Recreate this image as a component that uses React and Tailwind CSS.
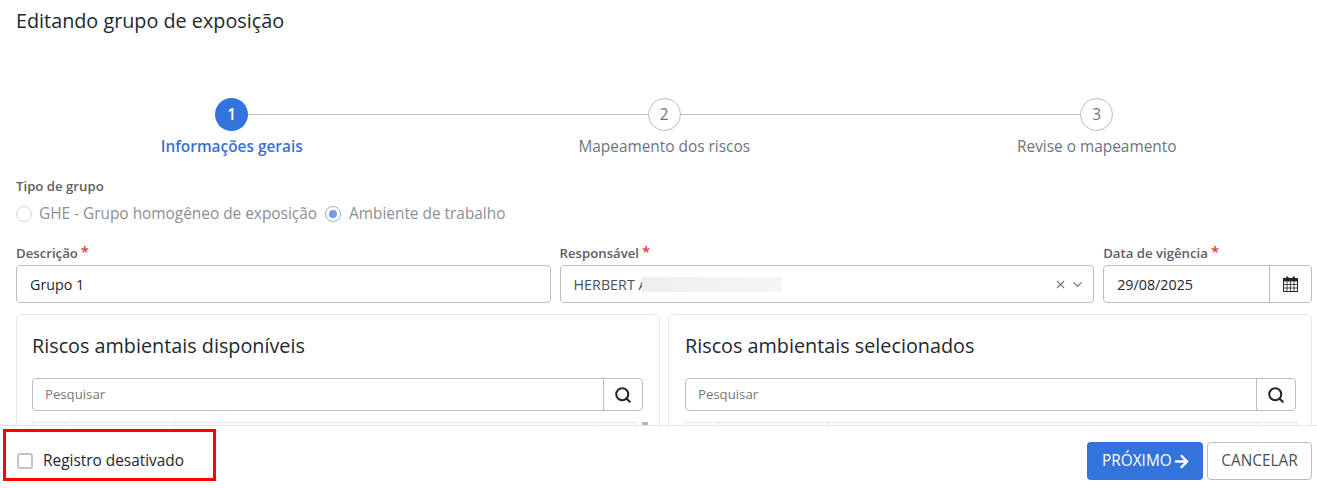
import { ArrowRight, ChevronDown, Search, X } from "lucide-react";

const steps = [
  { id: 1, label: "Informações gerais", active: true },
  { id: 2, label: "Mapeamento dos riscos" },
  { id: 3, label: "Revise o mapeamento" },
];

function Label({ children }) {
  return (
    <div className="flex h-[22px] items-start text-[13.2px] font-semibold leading-[20px] text-[#5c6066]">
      {children}
      <span className="ml-[3px] text-[15px] leading-[17px] text-[#e53935]">*</span>
    </div>
  );
}

function CalendarIcon() {
  return (
    <svg width="15" height="16" viewBox="0 0 15 16" className="text-[#23282e]">
      <rect x="3" y="0.5" width="2.5" height="4" rx="1" fill="currentColor" />
      <rect x="9.5" y="0.5" width="2.5" height="4" rx="1" fill="currentColor" />
      <rect x="0.5" y="2.5" width="14" height="3" fill="currentColor" />
      <rect x="0.5" y="2.5" width="14" height="13" fill="none" stroke="currentColor" />
      <path d="M4 5.5v10M7.5 5.5v10M11 5.5v10M0.5 8.5h14M0.5 12h14" stroke="currentColor" strokeWidth="0.8" fill="none" />
    </svg>
  );
}

function Panel({ title, inner, cols, scrollbar }) {
  return (
    <div className="relative h-[140px] min-w-0 flex-1 rounded-t-[6px] border border-[#e6e6e6] px-[15px] pt-[16px]">
      <h2 className={`${inner} text-[19.8px] leading-[30px] text-[#23282e]`}>{title}</h2>
      <div className={`${inner} mt-[17px] flex h-[33px] rounded-[4px] border border-[#bdbdbd]`}>
        <div className="flex flex-1 items-center pl-[12px] pt-px text-[13.2px] text-[#777]">Pesquisar</div>
        <div className="flex w-[39px] items-center justify-center border-l border-[#bdbdbd]">
          <Search size={18} strokeWidth={2.75} className="text-[#1c2733]" />
        </div>
      </div>
      <div className={`${cols} mt-[11px] flex h-[10px] border border-[#e6e6e6]`}>
        <div className="w-[33px] border-r border-[#e6e6e6]" />
        <div className="w-[110px] border-r border-[#e6e6e6]" />
        <div className="flex-1 border-r border-[#e6e6e6]" />
        <div className="w-[38px]" />
      </div>
      {scrollbar && <div className="absolute right-[11px] top-[107px] h-[4px] w-[6px] bg-[#b5b5b5]" />}
    </div>
  );
}

export default function App() {
  return (
    <div className="relative flex h-[488px] flex-col overflow-hidden bg-white font-['Open_Sans',sans-serif] text-[#23282e]">
      <div className="min-h-0 flex-1 overflow-hidden">
        <h1 className="pl-4 pt-[8px] text-[19.8px] leading-[26px]">Editando grupo de exposição</h1>

        <div className="mt-[64px] flex pl-[15.5px] pr-[4px]">
          {steps.map((step, i) => (
            <div key={step.id} className="relative flex w-[432.5px] flex-col items-center">
              {i < 2 && <div className="absolute left-1/2 top-[16px] h-px w-full bg-[#bdbdbd]" />}
              <div
                className={
                  step.active
                    ? "relative flex h-[33px] w-[33px] items-center justify-center rounded-full bg-[#3273dc] text-[15.4px] font-semibold text-white"
                    : "relative flex h-[33px] w-[33px] items-center justify-center rounded-full border border-[#bdbdbd] bg-white text-[15.4px] text-[#6c757d]"
                }
              >
                {step.id}
              </div>
              <div
                className={
                  step.active
                    ? "mt-[4px] text-[15.4px] font-semibold leading-[24px] text-[#3b70d6]"
                    : "mt-[4px] text-[15.4px] leading-[24px] text-[#6c757d]"
                }
              >
                {step.label}
              </div>
            </div>
          ))}
        </div>

        <div className="mt-[18px] pl-4 text-[13.2px] font-semibold leading-[18px] text-[#5c6066]">Tipo de grupo</div>
        <div className="mt-[9px] flex items-center pl-4 text-[15.4px] leading-[20px] text-[#8a8f94]">
          <span className="h-[16px] w-[16px] rounded-full border-[1.5px] border-[#d4d4d4]" />
          <span className="ml-[7px]">GHE - Grupo homogêneo de exposição</span>
          <span className="ml-[8px] flex h-[16px] w-[16px] items-center justify-center rounded-full border-[1.5px] border-[#8fb4ea]">
            <span className="h-[8px] w-[8px] rounded-full bg-[#6f9fe6]" />
          </span>
          <span className="ml-[8px]">Ambiente de trabalho</span>
        </div>

        <div className="mt-[19px] flex gap-[9px] pl-4 pr-[5px]">
          <div className="w-[535px]">
            <Label>Descrição</Label>
            <div className="flex h-[38px] items-center rounded-[4px] border border-[#bdbdbd] pl-[13px] pt-px text-[14.3px]">
              Grupo 1
            </div>
          </div>
          <div className="w-[535px]">
            <Label>Responsável</Label>
            <div className="flex h-[38px] items-center rounded-[4px] border border-[#bdbdbd] pl-[13px] pr-[8px] pt-px text-[14.3px] text-[#4a5058]">
              <span>HERBERT A</span>
              <div className="-ml-[6px] h-[15px] w-[140px] bg-gradient-to-r from-[#eeeeee] via-[#f2f2f2] to-[#f5f5f5]" />
              <div className="ml-auto flex items-center gap-[3px] text-[#777]">
                <X size={13} />
                <ChevronDown size={15} />
              </div>
            </div>
          </div>
          <div className="w-[209px]">
            <Label>Data de vigência</Label>
            <div className="flex h-[38px] rounded-[4px] border border-[#bdbdbd] text-[14.3px]">
              <div className="flex flex-1 items-center pl-[13px] pt-px">29/08/2025</div>
              <div className="flex w-[42px] items-center justify-center border-l border-[#bdbdbd]">
                <CalendarIcon />
              </div>
            </div>
          </div>
        </div>

        <div className="mt-[11px] flex gap-2 pl-4 pr-[5px]">
          <Panel title="Riscos ambientais disponíveis" inner="mr-px" cols="mr-[7px]" scrollbar />
          <Panel title="Riscos ambientais selecionados" inner="ml-px" cols="ml-px -mr-[1px]" />
        </div>
      </div>

      <div className="relative z-10 flex h-[63px] shrink-0 items-start justify-between border-t border-[#e3e3e3] bg-white pl-[17px] pr-[5px] pt-[16px]">
        <label className="mt-[9px] flex items-center text-[15.4px] leading-[20px]">
          <span className="h-[16px] w-[16px] rounded-[3px] border-2 border-[#c4c4c4]" />
          <span className="ml-[10px]">Registro desativado</span>
        </label>
        <div className="flex gap-1">
          <button className="flex h-[38px] w-[116px] items-center rounded-[4px] bg-[#3273dc] pl-[15px] text-[15.4px] text-white">
            PRÓXIMO
            <ArrowRight size={19} strokeWidth={3} />
          </button>
          <button className="h-[38px] w-[105px] rounded-[4px] border border-[#bdbdbd] bg-white text-[15.4px] text-[#4a5058]">
            CANCELAR
          </button>
        </div>
      </div>

      {/* red highlight drawn on top of the screenshot */}
      <div className="pointer-events-none absolute left-[3px] top-[429px] z-20 h-[52px] w-[213px] border-[3px] border-[#ff0000]" />
    </div>
  );
}
